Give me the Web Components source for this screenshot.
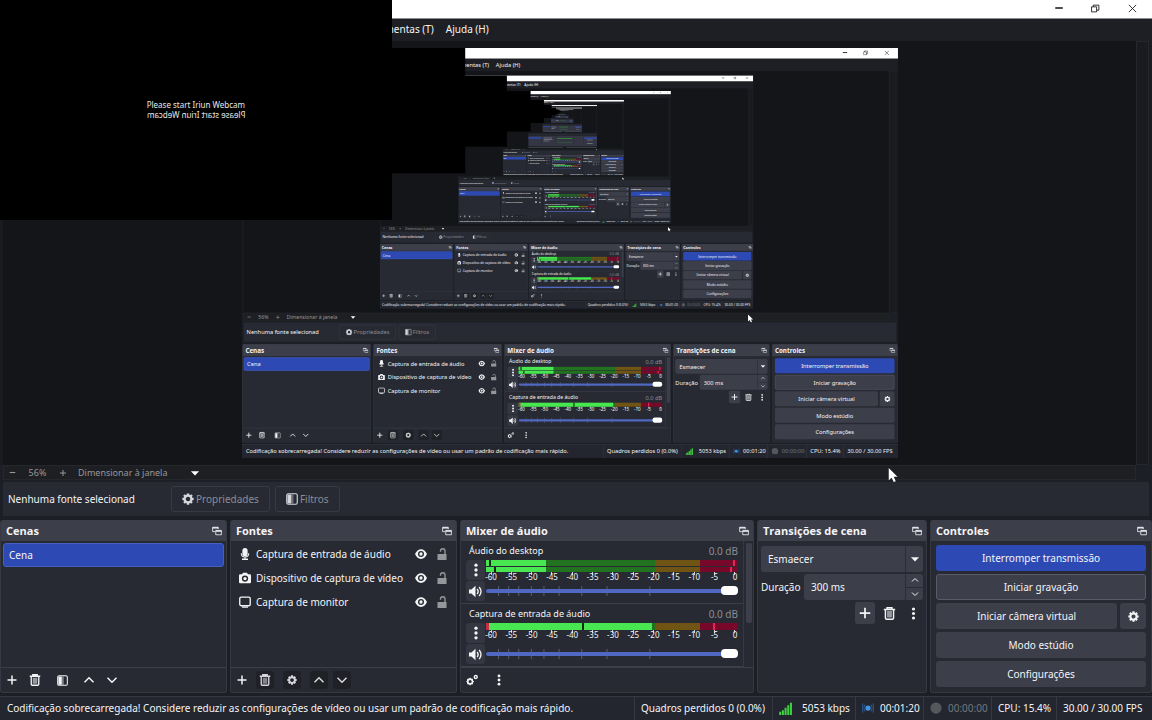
<!DOCTYPE html>
<html lang="pt-BR">
<head>
<meta charset="utf-8">
<title>OBS Studio</title>
<style>
    html, body{
        margin:0;
        height:100%;
        background:#1d1f26;
    }
    body{
        font-family:"Noto Sans", "Open Sans", sans-serif;
        font-size:10px;
        line-height:16px;
        color:#f4f4f6;
        overflow:hidden;
    }
</style>
</head>
<body>

<studio-window depth="5"></studio-window>

<script>
const base = `
    *{ box-sizing:border-box; }
    button, input, select{
        font:inherit;
        color:inherit;
        margin:0;
        padding:0;
        border:0;
        background:none;
        border-radius:3px;
        appearance:none;
        outline:none;
    }
    button{
        display:flex;
        align-items:center;
        justify-content:center;
    }
`;

const icons = {
    plus: `<path d="M8 2v12M2 8h12" stroke="currentColor" stroke-width="2" fill="none"/>`,
    minus: `<path d="M3 8h10" stroke="currentColor" stroke-width="2" fill="none"/>`,
    trash: `<path d="M1 3h14M5 3V1h6v2M3 4v9.500q0 1.500 1.500 1.500h7q1.500 0 1.500-1.500V4" stroke="currentColor" stroke-width="1.800" fill="none"/><path d="M5 5h6v8H5z" fill="currentColor" opacity=".55"/>`,
    filter: `<rect x="1" y="1" width="14" height="14" rx="2" fill="none" stroke="currentColor" stroke-width="1.500"/><path d="M2 2h5v12H2z" fill="currentColor"/><path d="M7 2h3v12H7z" fill="currentColor" opacity=".4"/>`,
    gear: `<circle cx="8" cy="8" r="4.500" fill="none" stroke="currentColor" stroke-width="3"/><path d="M8 .5v3M8 12.500v3M.5 8h3M12.500 8h3M2.700 2.700l2 2M11.300 11.300l2 2M13.300 2.700l-2 2M4.700 11.300l-2 2" stroke="currentColor" stroke-width="3.200"/>`,
    gears: `<circle cx="5.500" cy="10" r="3.200" fill="none" stroke="currentColor" stroke-width="2.200"/><path d="M5.500 5v10M.5 10h2M8.500 10h2M2 6.500l1.300 1.300M9 13.500l-1.300-1.300M9 6.500L7.700 7.800M2 13.500l1.300-1.300" stroke="currentColor" stroke-width="1.600" stroke-dasharray="2 6"/><circle cx="13" cy="4" r="2" fill="none" stroke="currentColor" stroke-width="1.800"/>`,
    up: `<path d="M2 11l6-6 6 6" stroke="currentColor" stroke-width="2" fill="none"/>`,
    down: `<path d="M2 5l6 6 6-6" stroke="currentColor" stroke-width="2" fill="none"/>`,
    arrow: `<path d="M1.500 5h13L8 12z" fill="currentColor"/>`,
    dots: `<circle cx="8" cy="2.500" r="1.900" fill="currentColor"/><circle cx="8" cy="8" r="1.900" fill="currentColor"/><circle cx="8" cy="13.500" r="1.900" fill="currentColor"/>`,
    popout: `<path d="M10 5V2H1v7h4" stroke="currentColor" stroke-width="1.300" fill="none"/><path d="M1 3h9" stroke="currentColor" stroke-width="2"/><path d="M6 7h9v7H6z" stroke="currentColor" stroke-width="1.300" fill="none"/><path d="M6 8h9" stroke="currentColor" stroke-width="2"/>`,
    mic: `<rect x="4.500" y="0" width="7" height="11" rx="3.500" fill="currentColor"/><path d="M3 7q0 5 5 5t5-5M8 12v3" stroke="currentColor" stroke-width="1.400" fill="none"/><path d="M4 14h8v2H4z" fill="currentColor"/>`,
    camera: `<path fill-rule="evenodd" fill="currentColor" d="M1.500 3H4l1.500-2h5L12 3h2.500Q16 3 16 4.500v9q0 1.500-1.500 1.500h-13Q0 15 0 13.500v-9Q0 3 1.500 3zM8 4.500a4.200 4.200 0 1 0 0 8.400 4.200 4.200 0 0 0 0-8.400z"/><circle cx="8" cy="8.700" r="2.200" fill="currentColor"/>`,
    monitor: `<rect x="1" y="1.500" width="14" height="11.500" rx="2" fill="none" stroke="currentColor" stroke-width="1.800"/><path d="M4 14.800h8" stroke="currentColor" stroke-width="1.600"/>`,
    eye: `<path d="M0 8q3-6.500 8-6.500T16 8q-3 6.500-8 6.500T0 8z" fill="currentColor"/><circle cx="8" cy="8" r="4" fill="#272a33"/><circle cx="8" cy="8" r="2.200" fill="currentColor"/>`,
    lock: `<path d="M2 8h12v8H2z" fill="currentColor"/><path d="M6 5V4q0-3 3-3t3 3v4" stroke="currentColor" stroke-width="1.800" fill="none"/>`,
    speaker: `<path d="M0 5.500h3L8 1v14l-5-4.500H0z" fill="currentColor"/><path d="M10 5q2.500 3 0 6M12.500 2.500q4.500 5.500 0 11" stroke="currentColor" stroke-width="1.700" fill="none"/>`,
    bars: `<path d="M1.500 16v-4M4.800 16v-6M8.100 16V7M11.400 16V4M14.700 16V1" stroke="#3fd13f" stroke-width="2.500"/>`,
    live: `<circle cx="8" cy="8" r="3.500" fill="#3f94e8"/><path d="M4 3.500q-3.500 4.500 0 9M12 3.500q3.500 4.500 0 9M1.500 2q-3 6 0 12M14.500 2q3 6 0 12" stroke="#2b62a0" stroke-width="1.200" fill="none"/>`,
    record: `<circle cx="8" cy="8" r="7.500" fill="#55575d"/>`,
    restore: `<path d="M1 5h9v9H1zM4 5V2h10v9h-4" stroke="currentColor" stroke-width="1.500" fill="none"/>`,
    close: `<path d="M1.500 1.500l13 13M14.500 1.500l-13 13" stroke="currentColor" stroke-width="1.500"/>`,
    pointer: `<path d="M2 0v14l3.300-3 2.400 5 2.300-1-2.300-5H12z" fill="#fff"/>`
};

class StudioIcon extends HTMLElement{
    constructor(){
        super();
        this.attachShadow({mode: "open"});
    }

    connectedCallback(){
        const size = this.getAttribute("size") || 12;
        this.shadowRoot.innerHTML = `
            <style>
                :host{ display:block; flex:none; width:${size}px; height:${size}px; }
                svg{ display:block; width:100%; height:100%; }
            </style>
            <svg viewBox="0 0 16 16" aria-hidden="true">${icons[this.getAttribute("name")]}</svg>
        `;
    }
}
customElements.define("studio-icon", StudioIcon);


class StudioDock extends HTMLElement{
    constructor(){
        super();
        this.attachShadow({mode: "open"});
    }

    connectedCallback(){
        this.shadowRoot.innerHTML = `
            <style>
                ${base}
                :host{
                    display:flex;
                    flex-direction:column;
                    min-width:0;
                    background:#272a33;
                    border:1px solid #363943;
                    border-top:0;
                    border-radius:3px;
                    overflow:hidden;
                }
                header{
                    display:flex;
                    align-items:center;
                    justify-content:space-between;
                    height:21px;
                    padding:0 4px 0 5px;
                    background:#3c3e4a;
                }
                h2{
                    margin:0;
                    font-family:"Open Sans", "Noto Sans", sans-serif;
                    font-size:11px;
                    line-height:16px;
                    font-weight:700;
                    white-space:nowrap;
                }
                .body{
                    flex:1;
                    min-height:0;
                }
                ::slotted([slot="tools"]){
                    display:flex;
                    align-items:center;
                    gap:9px;
                    height:25px;
                    padding:0 2px;
                    border-top:1px solid #3c3f4a;
                }
            </style>
            <header>
                <h2>${this.getAttribute("heading")}</h2>
                <button aria-label="Desacoplar"><studio-icon name="popout" size="10"></studio-icon></button>
            </header>
            <div class="body"><slot></slot></div>
            <slot name="tools"></slot>
        `;
    }
}
customElements.define("studio-dock", StudioDock);


class SourceItem extends HTMLElement{
    constructor(){
        super();
        this.attachShadow({mode: "open"});
    }

    connectedCallback(){
        this.shadowRoot.innerHTML = `
            <style>
                ${base}
                :host{
                    display:flex;
                    align-items:center;
                    height:24px;
                    padding:0 8px;
                    gap:5px;
                }
                span{
                    flex:1;
                    min-width:0;
                    white-space:nowrap;
                }
                label{ display:block; }
                label + label{
                    margin-left:4px;
                    color:#96979b;
                }
                input{
                    position:absolute;
                    opacity:0;
                    width:1px;
                    height:1px;
                }
            </style>
            <studio-icon name="${this.getAttribute("icon")}"></studio-icon>
            <span><slot></slot></span>
            <label><input type="checkbox" checked aria-label="Visível"><studio-icon name="eye"></studio-icon></label>
            <label><input type="checkbox" aria-label="Travar"><studio-icon name="lock"></studio-icon></label>
        `;
    }
}
customElements.define("source-item", SourceItem);


class MixerChannel extends HTMLElement{
    constructor(){
        super();
        this.attachShadow({mode: "open"});
    }

    connectedCallback(){
        const name = this.getAttribute("name");
        const stereo = this.hasAttribute("stereo");
        const scale = [];
        for (let db = -60; db <= 0; db += 5) scale.push(`<span>${db}</span>`);
        const notches = [5, 9, 13, 18, 23, 29, 38, 48, 65]
            .map(x => `<line x1="${x}%" x2="${x}%" y1="0" y2="10"/>`).join("");

        this.shadowRoot.innerHTML = `
            <style>
                ${base}
                :host{
                    display:block;
                    height:63px;
                    padding:2px 5px 0 5px;
                    border-bottom:1px solid #3c3f4a;
                }
                .title{
                    display:flex;
                    justify-content:space-between;
                    margin-bottom:1px;
                    padding:0 0 0 3px;
                    font-size:9px;
                    white-space:nowrap;
                }
                .title output{
                    color:#8b8d93;
                    font-size:10px;
                }
                .grid{
                    display:grid;
                    grid-template-columns:19px 1fr;
                    grid-template-rows:20px 20px;
                    column-gap:1px;
                    row-gap:1px;
                }
                button{
                    height:20px;
                    background:#343741;
                }
                .meter{
                    height:${stereo ? 12 : 7}px;
                    display:flex;
                    flex-direction:column;
                    gap:1px;
                }
                .bar{
                    flex:1;
                    background:linear-gradient(90deg, #22731f 67%, #6f5414 67% 85%, #78082a 85%);
                    position:relative;
                }
                .level{
                    height:100%;
                    background:#48e650;
                    border-left:3px solid ${stereo ? "#48e650" : "#c4304a"};
                }
                .bar i{
                    position:absolute;
                    top:0;
                    bottom:0;
                    width:2px;
                    background:#e02a55;
                }
                .bar i.quiet{ background:#0c2a10; }
                .scale{
                    display:flex;
                    justify-content:space-between;
                    padding:0 3px 0 5px;
                    font-size:8px;
                    line-height:10px;
                }
                .scale span{
                    width:0;
                    display:flex;
                    flex-direction:column;
                    align-items:center;
                }
                .scale span::before{
                    content:"";
                    width:1px;
                    height:3px;
                    margin-bottom:-3px;
                    background:#d0d0d4;
                }
                .fader{
                    display:grid;
                    align-items:center;
                }
                .fader > *{ grid-area:1 / 1; }
                svg{
                    width:100%;
                    height:10px;
                    stroke:#5b5f6c;
                }
                input{
                    width:100%;
                    height:10px;
                    z-index:1;
                }
                input::-webkit-slider-runnable-track{
                    height:4px;
                    background:#5068c2;
                    border-radius:2px;
                }
                input::-webkit-slider-thumb{
                    appearance:none;
                    width:17px;
                    height:9px;
                    margin-top:-3px;
                    border-radius:4px;
                    background:#fff;
                }
            </style>
            <div class="title"><span>${name}</span><output>0.0 dB</output></div>
            <div class="grid">
                <button aria-label="Opções de ${name}"><studio-icon name="dots" size="14"></studio-icon></button>
                <div>
                    <div class="meter"></div>
                    <div class="scale">${scale.join("")}</div>
                </div>
                <button aria-label="Silenciar ${name}"><studio-icon name="speaker" size="13"></studio-icon></button>
                <div class="fader">
                    <svg aria-hidden="true">${notches}</svg>
                    <input type="range" min="0" max="100" value="100" aria-label="Volume de ${name}">
                </div>
            </div>
        `;

        const bars = JSON.parse(this.getAttribute("bars"));
        this.shadowRoot.querySelector(".meter").innerHTML = bars.map(bar => `
            <div class="bar">
                <div class="level" style="width:${bar.level}%"></div>
                <i class="quiet" style="left:${bar.quiet}%"></i>
                <i style="left:${bar.peak}%"></i>
            </div>`).join("");
    }
}
customElements.define("mixer-channel", MixerChannel);


class WebcamSource extends HTMLElement{
    constructor(){
        super();
        this.attachShadow({mode: "open"});
    }

    connectedCallback(){
        this.shadowRoot.innerHTML = `
            <style>
                :host{
                    display:flex;
                    flex-direction:column;
                    align-items:center;
                    justify-content:center;
                    background:#000;
                    color:#e8e8e8;
                    font-size:8px;
                    line-height:10px;
                }
                /* the camera feed is flipped */
                .mirror{ transform:scaleX(-1); }
            </style>
            <div>Please start Iriun Webcam</div>
            <div class="mirror">Please start Iriun Webcam</div>
        `;
    }
}
customElements.define("webcam-source", WebcamSource);


// the far end of the tunnel: only bars and blocks are left of the window
class StudioThumbnail extends HTMLElement{
    constructor(){
        super();
        this.attachShadow({mode: "open"});
    }

    connectedCallback(){
        const shot = level => level === 0 ? "" : `
            <rect width="1152" height="720" fill="#1d1f26"/>
            <rect width="1152" height="19" fill="#fff"/>
            <rect x="3" y="41" width="1133" height="424" fill="#141518"/>
            <rect y="482" width="1152" height="34" fill="#272a33"/>
            <path d="M0 520h227v172H0zM230 520h227v172H230zM460 520h294v172H460zM757 520h170v172H757zM930 520h222v172H930z" fill="#343743"/>
            <path d="M3 543h221v24H3zM936 546h210v25H936z" fill="#2d4ab4"/>
            <path d="M486 560h252v11H486zM486 623h252v6H486z" fill="#2f9a35"/>
            <path d="M8 705h570v5H8zM640 705h500v5H640zM256 550h140v8H256zM256 575h150v8H256zM256 599h95v8H256zM980 584h98v7H980zM980 642h98v7H980z" fill="#9da0a8"/>
            <g transform="translate(242 48) scale(.5694)">${shot(level - 1)}</g>
            <rect width="392" height="220" fill="#000"/>`;

        this.shadowRoot.innerHTML = `
            <style>
                :host{ display:block; }
                svg{ display:block; width:100%; height:100%; }
            </style>
            <svg viewBox="0 0 1152 720" aria-hidden="true">${shot(5)}</svg>
        `;
    }
}
customElements.define("studio-thumbnail", StudioThumbnail);


class StudioWindow extends HTMLElement{
    constructor(){
        super();
        this.attachShadow({mode: "open"});
    }

    connectedCallback(){
        const depth = Number(this.getAttribute("depth"));
        // the monitor capture shows this same window again, one size smaller
        const capture = depth > 1
            ? `<studio-window class="capture" depth="${depth - 1}" inert></studio-window>`
            : `<studio-thumbnail class="capture"></studio-thumbnail>`;

        this.shadowRoot.innerHTML = `
            <style>
                ${base}
                :host{
                    display:flex;
                    flex-direction:column;
                    position:relative;
                    height:100%;
                    background:#1d1f26;
                    overflow:hidden;
                }
                .titlebar{
                    display:flex;
                    justify-content:flex-end;
                    height:19px;
                    padding:0 1px 2px 0;
                    background:#fff;
                    border-bottom:1px solid #8a8b8e;
                    color:#111;
                }
                .titlebar button{ width:37px; }
                .menubar{
                    display:flex;
                    gap:12px;
                    height:22px;
                    padding:0 0 2px 360px;
                    align-items:center;
                    background:#1e1f24;
                    white-space:nowrap;
                }
                .canvas{
                    flex:1;
                    min-height:0;
                    display:grid;
                    grid-template-columns:1fr 13px;
                    padding:0 3px;
                    background:#1a1b1f;
                }
                .preview{
                    display:flex;
                    justify-content:center;
                    min-height:0;
                    padding:7px 0;
                    background:#141518;
                }
                .screen{
                    position:relative;
                    aspect-ratio:8 / 5;
                    background:#1d1f26;
                    overflow:hidden;
                }
                .capture{
                    position:absolute;
                    top:0;
                    left:0;
                    width:calc(100% / 0.5694);
                    height:calc(100% / 0.5694);
                    transform:scale(0.5694);
                    transform-origin:0 0;
                }
                .vscroll{
                    border:1px solid #25272c;
                    background:#1a1b1f;
                }
                .zoombar{
                    display:flex;
                    align-items:center;
                    height:15px;
                    margin:0 16px 0 3px;
                    background:#1e1f23;
                    border:1px solid #25272c;
                    color:#96979b;
                    font-size:9px;
                }
                .zoombar button{ width:16px; }
                .zoombar span{
                    width:35px;
                    text-align:center;
                }
                .zoombar label{
                    display:flex;
                    align-items:center;
                    margin-left:7px;
                    color:#fff;
                }
                .zoombar select{
                    width:112px;
                    height:13px;
                    line-height:13px;
                    color:#96979b;
                }
                .context{
                    display:flex;
                    align-items:center;
                    gap:5px;
                    height:34px;
                    margin:2px 3px 4px 3px;
                    padding:0 5px;
                    background:#272a33;
                }
                .context p{
                    width:158px;
                    margin:0;
                    white-space:nowrap;
                }
                .context button{
                    gap:2px;
                    height:26px;
                    padding:0 10px;
                    border:1px solid #373a45;
                    color:#8b8d93;
                }
                .context studio-icon{ color:#d4d6dc; }
                .docks{
                    display:grid;
                    grid-template-columns:227fr 227fr 294fr 170fr 222fr;
                    gap:3px;
                    height:173px;
                }
                .scene{
                    display:block;
                    width:calc(100% - 4px);
                    height:24px;
                    margin:2px;
                    padding-left:5px;
                    background:#2d4ab4;
                    border:1px solid #4660c0;
                    text-align:left;
                }
                .sources{ padding:1px 0; }
                .group{
                    display:flex;
                    gap:5px;
                }
                .group button{
                    width:18px;
                    height:18px;
                }
                .group button:disabled{
                    color:#d4d6dc;
                    background:#1f2127;
                }
                .mixer{
                    display:grid;
                    grid-template-columns:1fr 10px;
                    height:100%;
                    overflow:hidden;
                }
                .track{
                    border-left:1px solid #363943;
                    padding:2px 1px;
                }
                .thumb{
                    height:80px;
                    margin-left:1px;
                    background:#3c3e4a;
                    border-radius:2px;
                }
                .transitions{
                    display:flex;
                    flex-direction:column;
                    gap:2px;
                    padding:5px 3px;
                }
                .field{
                    display:flex;
                    align-items:center;
                    gap:3px;
                }
                .field label{ width:40px; }
                .box{
                    min-width:0;
                    display:grid;
                    grid-template-columns:1fr 18px;
                    height:26px;
                    background:#3c3e4a;
                    border-radius:3px;
                }
                .field .box{ flex:1; }
                .box select, .box input{
                    min-width:0;
                    width:100%;
                    padding-left:7px;
                }
                .box .end{
                    display:grid;
                    place-items:center;
                    border-left:1px solid #2a2d36;
                }
                .box .end button{
                    width:100%;
                    height:100%;
                    border-radius:0;
                }
                .box .end button + button{ border-top:1px solid #2a2d36; }
                .actions{
                    display:flex;
                    justify-content:flex-end;
                    gap:4px;
                }
                .actions button{
                    width:20px;
                    height:22px;
                }
                .actions button:first-child{ background:#3c3e4a; }
                .controls{
                    display:flex;
                    flex-direction:column;
                    gap:3px;
                    padding:4px 5px;
                }
                .controls div{
                    display:grid;
                    grid-template-columns:1fr 26px;
                    gap:3px;
                }
                .controls button{
                    height:26px;
                    background:#3c3e4a;
                }
                .controls .live{ background:#2d4ab4; }
                .controls .focus{ border:1px solid #595c68; }
                footer{
                    display:flex;
                    height:24px;
                    margin-top:3px;
                    border-top:1px solid #363943;
                    background:#23262e;
                    line-height:22px;
                    white-space:nowrap;
                }
                footer p{
                    flex:1;
                    margin:0;
                    padding-left:7px;
                    overflow:hidden;
                }
                footer span{
                    display:flex;
                    align-items:center;
                    gap:6px;
                    padding:0 0 1px 6px;
                    border-left:1px solid #363943;
                }
                .w-l{ width:138px; }
                .w-m{ width:83px; gap:10px; }
                .w-s{ width:68px; }
                .w-c{ width:65px; }
                .w-f{ width:96px; }
                .off{ color:#74767c; }
                .webcam{
                    position:absolute;
                    top:0;
                    left:0;
                    width:34%;
                    height:30.6%;
                }
                .pointer{
                    position:absolute;
                    left:77%;
                    top:65%;
                }
            </style>

            <div class="titlebar">
                <button aria-label="Minimizar"><studio-icon name="minus" size="12"></studio-icon></button>
                <button aria-label="Restaurar"><studio-icon name="restore" size="9"></studio-icon></button>
                <button aria-label="Fechar"><studio-icon name="close" size="9"></studio-icon></button>
            </div>
            <nav class="menubar">
                <button>Ferramentas (T)</button>
                <button>Ajuda (H)</button>
            </nav>

            <main class="canvas">
                <div class="preview"><div class="screen">${capture}</div></div>
                <div class="vscroll"></div>
            </main>
            <div class="zoombar">
                <button aria-label="Diminuir"><studio-icon name="minus" size="9"></studio-icon></button>
                <span>56%</span>
                <button aria-label="Aumentar"><studio-icon name="plus" size="8"></studio-icon></button>
                <label><select aria-label="Escala"><option>Dimensionar à janela</option></select><studio-icon name="arrow" size="10"></studio-icon></label>
            </div>

            <div class="context">
                <p>Nenhuma fonte selecionad</p>
                <button><studio-icon name="gear"></studio-icon>Propriedades</button>
                <button><studio-icon name="filter"></studio-icon>Filtros</button>
            </div>

            <div class="docks">
                <studio-dock heading="Cenas">
                    <button class="scene">Cena</button>
                    <div slot="tools">
                        <div class="group">
                            <button aria-label="Adicionar cena"><studio-icon name="plus"></studio-icon></button>
                            <button aria-label="Remover cena"><studio-icon name="trash"></studio-icon></button>
                        </div>
                        <div class="group">
                            <button aria-label="Filtros da cena"><studio-icon name="filter" size="11"></studio-icon></button>
                        </div>
                        <div class="group">
                            <button aria-label="Subir cena"><studio-icon name="up"></studio-icon></button>
                            <button aria-label="Descer cena"><studio-icon name="down"></studio-icon></button>
                        </div>
                    </div>
                </studio-dock>

                <studio-dock heading="Fontes">
                    <div class="sources">
                        <source-item icon="mic">Captura de entrada de áudio</source-item>
                        <source-item icon="camera">Dispositivo de captura de vídeo</source-item>
                        <source-item icon="monitor">Captura de monitor</source-item>
                    </div>
                    <div slot="tools">
                        <div class="group">
                            <button aria-label="Adicionar fonte"><studio-icon name="plus"></studio-icon></button>
                            <button disabled aria-label="Remover fonte"><studio-icon name="trash"></studio-icon></button>
                        </div>
                        <div class="group">
                            <button disabled aria-label="Propriedades da fonte"><studio-icon name="gear" size="10"></studio-icon></button>
                        </div>
                        <div class="group">
                            <button disabled aria-label="Subir fonte"><studio-icon name="up"></studio-icon></button>
                            <button disabled aria-label="Descer fonte"><studio-icon name="down"></studio-icon></button>
                        </div>
                    </div>
                </studio-dock>

                <studio-dock heading="Mixer de áudio">
                    <div class="mixer">
                        <div>
                            <mixer-channel name="Áudio do desktop" stereo
                                bars='[{"level":24,"quiet":1,"peak":98},{"level":24,"quiet":3,"peak":97}]'></mixer-channel>
                            <mixer-channel name="Captura de entrada de áudio"
                                bars='[{"level":66,"quiet":38,"peak":90}]'></mixer-channel>
                        </div>
                        <div class="track"><div class="thumb"></div></div>
                    </div>
                    <div slot="tools">
                        <div class="group">
                            <button aria-label="Propriedades de áudio"><studio-icon name="gears"></studio-icon></button>
                        </div>
                        <div class="group">
                            <button aria-label="Menu do mixer"><studio-icon name="dots"></studio-icon></button>
                        </div>
                    </div>
                </studio-dock>

                <studio-dock heading="Transições de cena">
                    <div class="transitions">
                        <div class="box">
                            <select aria-label="Transição"><option>Esmaecer</option></select>
                            <div class="end"><studio-icon name="arrow" size="10"></studio-icon></div>
                        </div>
                        <div class="field">
                            <label for="duration">Duração</label>
                            <div class="box">
                                <input id="duration" type="text" value="300 ms">
                                <div class="end">
                                    <button aria-label="Aumentar duração"><studio-icon name="up" size="8"></studio-icon></button>
                                    <button aria-label="Diminuir duração"><studio-icon name="down" size="8"></studio-icon></button>
                                </div>
                            </div>
                        </div>
                        <div class="actions">
                            <button aria-label="Adicionar transição"><studio-icon name="plus" size="14"></studio-icon></button>
                            <button aria-label="Remover transição"><studio-icon name="trash" size="13"></studio-icon></button>
                            <button aria-label="Menu da transição"><studio-icon name="dots" size="13"></studio-icon></button>
                        </div>
                    </div>
                </studio-dock>

                <studio-dock heading="Controles">
                    <div class="controls">
                        <button class="live">Interromper transmissão</button>
                        <button class="focus">Iniciar gravação</button>
                        <div>
                            <button>Iniciar câmera virtual</button>
                            <button aria-label="Configurar câmera virtual"><studio-icon name="gear" size="11"></studio-icon></button>
                        </div>
                        <button>Modo estúdio</button>
                        <button>Configurações</button>
                    </div>
                </studio-dock>
            </div>

            <footer>
                <p>Codificação sobrecarregada! Considere reduzir as configurações de vídeo ou usar um padrão de codificação mais rápido.</p>
                <span class="w-l">Quadros perdidos 0 (0.0%)</span>
                <span class="w-m"><studio-icon name="bars" size="13"></studio-icon>5053 kbps</span>
                <span class="w-s"><studio-icon name="live"></studio-icon>00:01:20</span>
                <span class="w-s off"><studio-icon name="record"></studio-icon>00:00:00</span>
                <span class="w-c">CPU: 15.4%</span>
                <span class="w-f">30.00 / 30.00 FPS</span>
            </footer>

            <webcam-source class="webcam"></webcam-source>
            <studio-icon class="pointer" name="pointer" size="14"></studio-icon>
        `;
    }
}
customElements.define("studio-window", StudioWindow);
</script>
</body>
</html>
